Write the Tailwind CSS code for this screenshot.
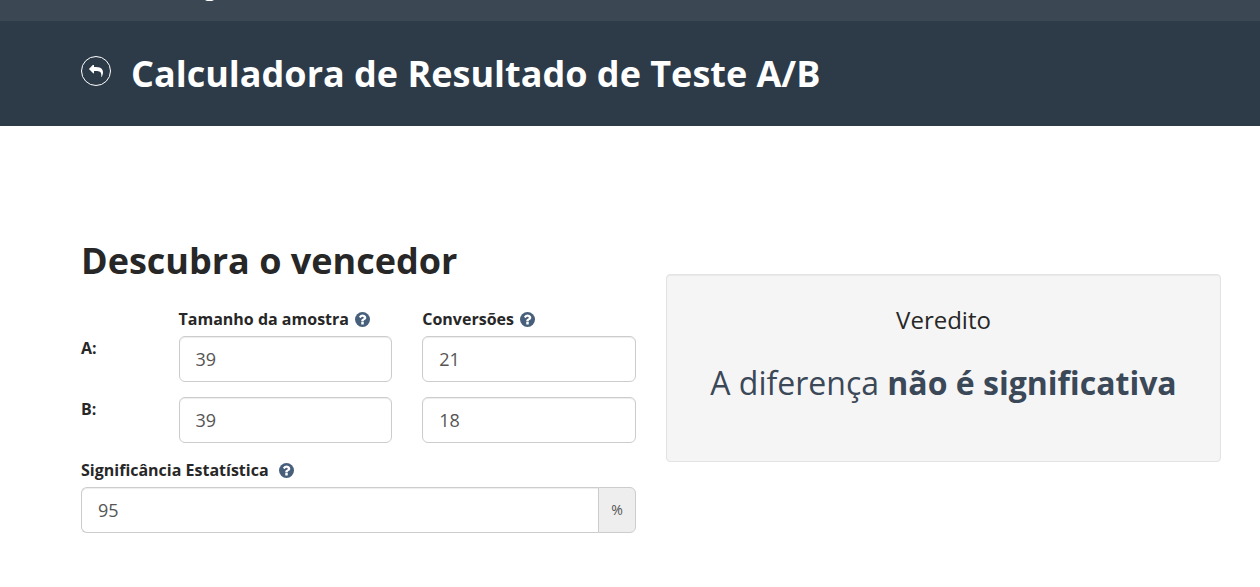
<!DOCTYPE html>
<html lang="pt-BR">
<head>
<meta charset="utf-8">
<meta name="viewport" content="width=device-width, initial-scale=1">
<title>Calculadora de Resultado de Teste A/B</title>
<script src="https://cdn.jsdelivr.net/npm/@tailwindcss/browser@4"></script>
</head>
<body class="bg-white font-['Open_Sans',sans-serif] text-[#272727]">
<svg class="hidden" aria-hidden="true">
  <symbol id="help" viewBox="0 0 1536 1536">
    <path fill="#475f7b" d="M768 0a768 768 0 1 0 0 1536A768 768 0 0 0 768 0z"/>
    <path fill="#fff" d="M896 1248v-192q0-14-9-23t-23-9H672q-14 0-23 9t-9 23v192q0 14 9 23t23 9h192q14 0 23-9t9-23zM1152 576q0-88-55.500-163T958 297t-170-41q-243 0-371 213-15 24 8 42l132 100q7 6 19 6 16 0 25-12 53-68 86-92 34-24 86-24 48 0 85.500 26t37.500 59q0 38-20 61t-68 45q-63 28-115.500 86.500T640 892v36q0 14 9 23t23 9h192q14 0 23-9t9-23q0-19 21.500-49.500T972 829q32-18 49-28.500t46-35 44.500-48 28-60.500 12.500-81z"/>
  </symbol>
</svg>
<nav class="h-[21px] overflow-hidden bg-[#3b4854] pl-[204px]">
  <svg class="h-px w-[11px]" viewBox="0 0 11 1" fill="#fff" aria-hidden="true"><path d="M1 0h9L8 1H3z"/></svg>
</nav>
<header class="flex items-center gap-5 bg-[#2d3b49] pt-[26px] pr-10 pb-[26px] pl-[81px]">
  <a href="#" aria-label="Voltar" class="mb-1.5 flex size-[30px] shrink-0 items-center justify-center rounded-full border border-white">
    <svg class="h-3 w-3.5" viewBox="0 0 1792 1536" fill="#fff"><path d="M1792 992q0 166-127 451-3 7-10.500 24t-13.500 30-13 22q-12 17-28 17-15 0-23.500-10t-8.500-25q0-9 2.500-26.500t2.500-23.500q5-68 5-123 0-101-17.500-181t-48.500-138.500-80-101-105.500-69.500-133-42.500-154-21.500-175.500-6H640v256q0 26-19 45t-45 19-45-19L19 557Q0 538 0 512t19-45L531-45q19-19 45-19t45 19 19 45v256h224q713 0 875 403 53 134 53 333z"/></svg>
  </a>
  <h1 class="text-4xl leading-[53px] font-bold text-white">Calculadora de Resultado de Teste A/B</h1>
</header>
<main class="grid grid-cols-2 items-start gap-[30px] pt-28 pr-[39px] pl-[81px]">
  <form>
    <h2 class="text-4xl leading-[46px] font-bold">Descubra o vencedor</h2>
    <div class="mt-[23px] grid grid-cols-12 gap-x-[30px] text-base leading-6 font-bold">
      <label for="na" class="col-span-5 col-start-3 flex items-center gap-1.5 whitespace-nowrap">Tamanho da amostra <svg class="size-[15px]"><use href="#help"/></svg></label>
      <label for="ca" class="col-span-5 flex items-center gap-1.5 whitespace-nowrap">Conversões <svg class="size-[15px]"><use href="#help"/></svg></label>
    </div>
    <div class="mt-[5px] grid grid-cols-12 gap-x-[30px] gap-y-[15px]">
      <span class="col-span-2 text-base leading-6 font-bold">A:</span>
      <input id="na" type="text" value="39" class="col-span-5 h-[46px] w-full min-w-0 rounded-md border border-[#ccc] px-4 text-lg text-[#555] shadow-[inset_0_1px_1px_rgba(0,0,0,0.075)]">
      <input id="ca" type="text" value="21" class="col-span-5 h-[46px] w-full min-w-0 rounded-md border border-[#ccc] px-4 text-lg text-[#555] shadow-[inset_0_1px_1px_rgba(0,0,0,0.075)]">
      <span class="col-span-2 text-base leading-6 font-bold">B:</span>
      <input type="text" value="39" aria-label="Tamanho da amostra B" class="col-span-5 h-[46px] w-full min-w-0 rounded-md border border-[#ccc] px-4 text-lg text-[#555] shadow-[inset_0_1px_1px_rgba(0,0,0,0.075)]">
      <input type="text" value="18" aria-label="Conversões B" class="col-span-5 h-[46px] w-full min-w-0 rounded-md border border-[#ccc] px-4 text-lg text-[#555] shadow-[inset_0_1px_1px_rgba(0,0,0,0.075)]">
    </div>
    <label for="sig" class="mt-[15px] flex items-center gap-2.5 text-base leading-6 font-bold">Significância Estatística <svg class="size-[15px]"><use href="#help"/></svg></label>
    <div class="mt-[5px] flex h-[46px]">
      <input id="sig" type="text" value="95" class="min-w-0 flex-1 rounded-l-md border border-r-0 border-[#ccc] px-4 text-lg text-[#555] shadow-[inset_0_1px_1px_rgba(0,0,0,0.075)]">
      <span class="flex w-[38px] items-center justify-center rounded-r-md border border-[#ccc] bg-[#eee] text-sm text-[#555]">%</span>
    </div>
  </form>
  <section class="mt-9 rounded border border-[#e3e3e3] bg-[#f5f5f5] px-5 pt-7 pb-[55px] text-center shadow-[inset_0_1px_1px_rgba(0,0,0,0.05)]">
    <h3 class="text-2xl leading-[34px]">Veredito</h3>
    <p class="mt-[23px] text-[32px] leading-[46px] text-[#3b4858]">A diferença <strong class="font-bold">não é significativa</strong></p>
  </section>
</main>
</body>
</html>
